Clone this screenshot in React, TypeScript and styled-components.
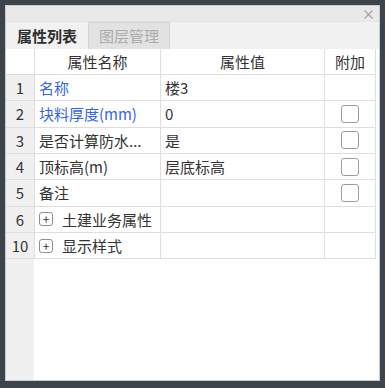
import styled, { createGlobalStyle } from 'styled-components'

const GlobalStyle = createGlobalStyle`
  html, body {
    margin: 0;
    padding: 0;
    background: #3e444b;
  }
  body {
    width: 385px;
    height: 388px;
    overflow: hidden;
    font-family: "Noto Sans CJK SC", "Noto Sans", sans-serif;
  }
`

interface PropRow {
  no: string
  name: string
  value?: string
  link?: boolean
  check?: boolean
  group?: boolean
}

const rows: PropRow[] = [
  { no: '1', name: '名称', value: '楼3', link: true },
  { no: '2', name: '块料厚度(mm)', value: '0', link: true, check: true },
  { no: '3', name: '是否计算防水...', value: '是', check: true },
  { no: '4', name: '顶标高(m)', value: '层底标高', check: true },
  { no: '5', name: '备注', check: true },
  { no: '6', name: '土建业务属性', group: true },
  { no: '10', name: '显示样式', group: true },
]

const CloseIcon = () => (
  <svg width="9" height="9" viewBox="0 0 9 9">
    <path d="M0.5 0.5 L8.5 8.5 M8.5 0.5 L0.5 8.5" stroke="#a6a6a6" strokeWidth="1.3" fill="none" />
  </svg>
)

const App = () => {
  return (
    <>
      <GlobalStyle />
      <Panel>
        <TitleBar>
          <CloseButton>
            <CloseIcon />
          </CloseButton>
        </TitleBar>

        <TabBar>
          <Tab $active>属性列表</Tab>
          <Tab>图层管理</Tab>
        </TabBar>

        <GridArea>
          <Grid>
            <HeaderCell />
            <HeaderCell>属性名称</HeaderCell>
            <HeaderCell>属性值</HeaderCell>
            <HeaderCell>附加</HeaderCell>

            {rows.map((row) => (
              <Row key={row.no}>
                <NumberCell>{row.no}</NumberCell>
                <NameCell $link={row.link}>
                  {row.group && <PlusBox>+</PlusBox>}
                  {row.name}
                </NameCell>
                <ValueCell>{row.value}</ValueCell>
                <CheckCell>{row.check && <CheckBox />}</CheckCell>
              </Row>
            ))}
          </Grid>
        </GridArea>
      </Panel>
    </>
  )
}

const Panel = styled.div`
  box-sizing: border-box;
  width: 375px;
  height: 376px;
  margin: 5px 0 0 5px;
  border: 1px solid #c9cbcd;
  display: flex;
  flex-direction: column;
  background: #f0f0f0;
`

const TitleBar = styled.div`
  height: 15px;
  background: #e9e9e9;
  display: flex;
  align-items: center;
  justify-content: flex-end;
  padding-right: 6px;
`

const CloseButton = styled.div`
  display: flex;
  align-items: center;
  margin-top: 2px;
`

const TabBar = styled.div`
  height: 28px;
  display: flex;
  align-items: flex-end;
  background: #f1f1f1;
  border-top: 1px solid #e2e2e2;
  box-sizing: border-box;
`

const Tab = styled.div<{ $active?: boolean }>`
  box-sizing: border-box;
  width: 82px;
  height: 27px;
  padding-bottom: 1px;
  display: flex;
  align-items: center;
  justify-content: center;
  font-size: 15px;
  font-weight: ${(p) => (p.$active ? 700 : 400)};
  color: ${(p) => (p.$active ? '#2e2e2e' : '#ababab')};
  background: ${(p) => (p.$active ? '#f1f1f1' : '#e2e2e2')};
  border: ${(p) => (p.$active ? 'none' : '1px solid #d3d3d3')};
  border-bottom: none;
`

const GridArea = styled.div`
  flex: 1;
  background: linear-gradient(to right, #f0f0f0 28px, #ffffff 28px);
`

const Grid = styled.div`
  display: grid;
  grid-template-columns: 29px 126px 164px 51px;
  font-size: 15px;
  color: #333;
`

const Row = styled.div`
  display: contents;
`

const Cell = styled.div`
  box-sizing: border-box;
  height: 26.33px;
  border-right: 1px solid #dedede;
  border-bottom: 1px solid #dedede;
  display: flex;
  align-items: center;
  white-space: nowrap;
  overflow: hidden;
`

const HeaderCell = styled(Cell)`
  height: 26px;
  justify-content: center;
  background: #ffffff;
`

const NumberCell = styled(Cell)`
  justify-content: center;
  background: #f0f0f0;
`

const NameCell = styled(Cell)<{ $link?: boolean }>`
  padding-left: 4px;
  color: ${(p) => (p.$link ? '#3563e9' : '#333')};
  background: #ffffff;
`

const ValueCell = styled(Cell)`
  padding-left: 4px;
  background: #ffffff;
`

const CheckCell = styled(Cell)`
  justify-content: center;
  background: #ffffff;
`

const CheckBox = styled.span`
  box-sizing: border-box;
  width: 18px;
  height: 18px;
  border: 1.5px solid #9d9d9d;
  border-radius: 3px;
  background: #fff;
`

const PlusBox = styled.span`
  box-sizing: border-box;
  width: 14px;
  height: 14px;
  margin-right: 9px;
  border: 1px solid #8f8f8f;
  border-radius: 3px;
  display: flex;
  align-items: center;
  justify-content: center;
  font-size: 12px;
  line-height: 1;
  color: #333;
`

export default App
